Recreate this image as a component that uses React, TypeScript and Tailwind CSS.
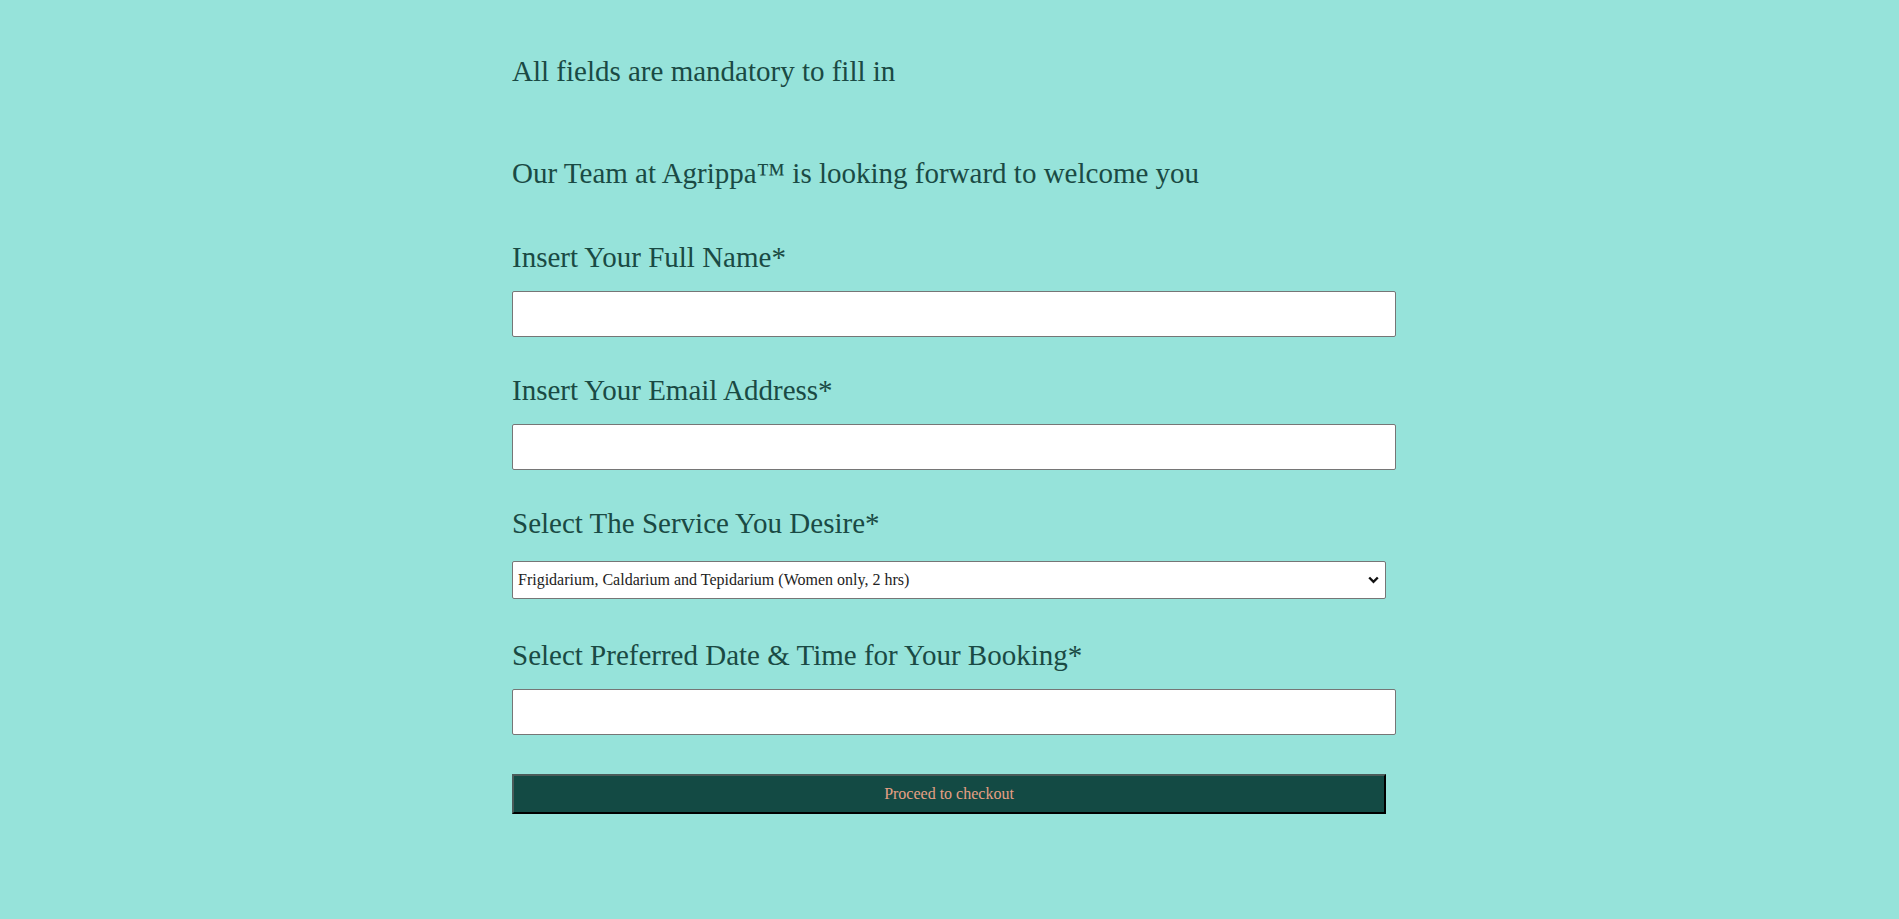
import React from 'react';

const serif = { fontFamily: '"Liberation Serif", "DejaVu Serif", serif' };

const Label: React.FC<{ text: string; className?: string }> = ({ text, className }) => (
    <label className={`block text-[29px] leading-[34px] text-[#1a4a44] ${className ?? ''}`}>{text}</label>
);

export default function App() {
    return (
        <div className="min-h-screen w-full bg-[#96e3da] pl-[512px] pt-[54px]" style={serif}>
            <form className="w-[884px]" onSubmit={(e) => e.preventDefault()}>
                <p className="text-[29px] leading-[34px] text-[#1a4a44]">All fields are mandatory to fill in</p>
                <p className="mt-[68px] text-[29px] leading-[34px] text-[#1a4a44]">
                    Our Team at Agrippa™ is looking forward to welcome you
                </p>

                <Label text="Insert Your Full Name*" className="mt-[50px]" />
                <input type="text" className="mt-[17px] block h-[46px] w-[884px] rounded-[2px] border border-[#767676] bg-white px-2" />

                <Label text="Insert Your Email Address*" className="mt-[36px]" />
                <input type="email" className="mt-[17px] block h-[46px] w-[884px] rounded-[2px] border border-[#767676] bg-white px-2" />

                <Label text="Select The Service You Desire*" className="mt-[36px]" />
                <div className="relative mt-[21px] w-[874px]">
                    <select
                        className="block h-[38px] w-full appearance-none rounded-[2px] border border-[#767676] bg-white pl-[5px] text-[16px] text-[#222]"
                        style={serif}
                        defaultValue="fct"
                    >
                        <option value="fct">Frigidarium, Caldarium and Tepidarium (Women only, 2 hrs)</option>
                        <option value="fctm">Frigidarium, Caldarium and Tepidarium (Men only, 2 hrs)</option>
                    </select>
                    <svg className="pointer-events-none absolute right-[7px] top-[15px]" width="11" height="8" viewBox="0 0 11 8" fill="none">
                        <path d="M1.2 1.5L5.5 5.8L9.8 1.5" stroke="#111" strokeWidth="2.4" />
                    </svg>
                </div>

                <Label text="Select Preferred Date & Time for Your Booking*" className="mt-[39px]" />
                <input type="text" className="mt-[17px] block h-[46px] w-[884px] rounded-[2px] border border-[#767676] bg-white px-2" />

                <button
                    type="submit"
                    className="mt-[39px] block h-[40px] w-[874px] border-2 border-t-[#4b5b59] border-l-[#4b5b59] border-b-black border-r-black bg-[#134a44] text-[16px] text-[#e6a084]"
                    style={serif}
                >
                    Proceed to checkout
                </button>
            </form>
        </div>
    );
}
